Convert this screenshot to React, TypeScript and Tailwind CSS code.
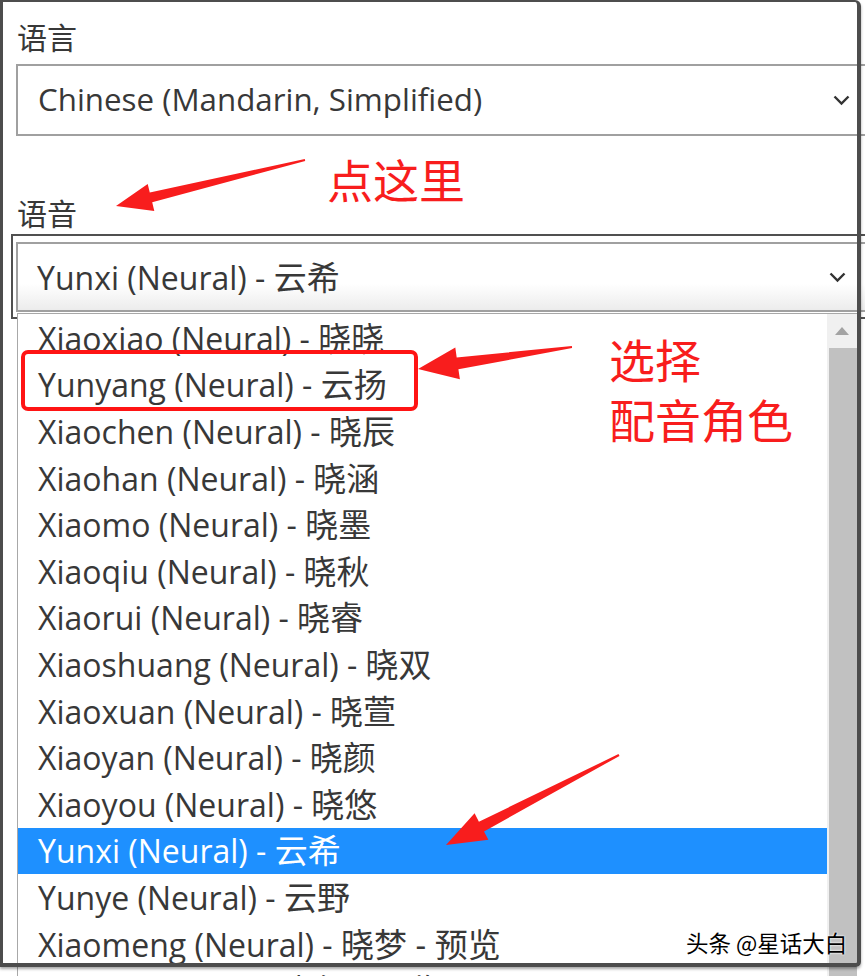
import React from 'react';

const voices = [
  { en: 'Xiaoxiao (Neural) - ', zh: '晓晓' },
  { en: 'Yunyang (Neural) - ', zh: '云扬' },
  { en: 'Xiaochen (Neural) - ', zh: '晓辰' },
  { en: 'Xiaohan (Neural) - ', zh: '晓涵' },
  { en: 'Xiaomo (Neural) - ', zh: '晓墨' },
  { en: 'Xiaoqiu (Neural) - ', zh: '晓秋' },
  { en: 'Xiaorui (Neural) - ', zh: '晓睿' },
  { en: 'Xiaoshuang (Neural) - ', zh: '晓双' },
  { en: 'Xiaoxuan (Neural) - ', zh: '晓萱' },
  { en: 'Xiaoyan (Neural) - ', zh: '晓颜' },
  { en: 'Xiaoyou (Neural) - ', zh: '晓悠' },
  { en: 'Yunxi (Neural) - ', zh: '云希' },
  { en: 'Yunye (Neural) - ', zh: '云野' },
  { en: 'Xiaomeng (Neural) - ', zh: '晓梦 - 预览' },
  { en: 'Xiaoyi (Neural) - ', zh: '晓伊 - 预览' },
];

const selected = 11;

// tapered PPT-style arrow, from tail to tip
function arrow(tx: number, ty: number, px: number, py: number, headLen: number, headW: number, w0: number, w1: number) {
  const dx = px - tx;
  const dy = py - ty;
  const len = Math.hypot(dx, dy);
  const ux = dx / len;
  const uy = dy / len;
  const nx = -uy;
  const ny = ux;
  const bx = px - ux * headLen;
  const by = py - uy * headLen;
  const pts = [
    [tx + (nx * w0) / 2, ty + (ny * w0) / 2],
    [bx + (nx * w1) / 2, by + (ny * w1) / 2],
    [bx + (nx * headW) / 2, by + (ny * headW) / 2],
    [px, py],
    [bx - (nx * headW) / 2, by - (ny * headW) / 2],
    [bx - (nx * w1) / 2, by - (ny * w1) / 2],
    [tx - (nx * w0) / 2, ty - (ny * w0) / 2],
  ];
  return pts.map(p => p.map(v => v.toFixed(1)).join(',')).join(' ');
}

function Chevron() {
  return (
    <svg width="17" height="11" viewBox="0 0 17 11" className="shrink-0">
      <path d="M1.5 1.5 L8.5 8.5 L15.5 1.5" fill="none" stroke="#333" strokeWidth="2.4" />
    </svg>
  );
}

export default function App() {
  return (
    <div className="relative w-[865px] h-[976px] overflow-hidden bg-white font-['Open_Sans','Noto_Sans_CJK_SC',sans-serif] text-[#383838]">
      {/* Form */}
      <div className="pt-[18px] pl-[16px]">
        <div className="pl-[1px] text-[30px] leading-[40px]">语言</div>
        <div className="mt-[6px] flex h-[72px] w-[860px] items-center justify-between border-2 border-[#a0a0a0] pl-[20px] pr-[24px]">
          <span className="text-[31.3px] leading-none">Chinese (Mandarin, Simplified)</span>
          <Chevron />
        </div>

        <div className="mt-[58px] pl-[1px] text-[30px] leading-[40px]">语音</div>
        <div className="-ml-[5px] w-[865px] h-[85px] border-2 border-[#505050] pt-[6px] pl-[3px]">
          <div className="flex h-[70px] items-center justify-between border-2 border-[#a0a0a0] bg-gradient-to-b from-white from-60% to-[#ececec] pl-[19px] pr-[26px]">
            <span className="text-[32px] leading-none">
              Yunxi (Neural) - <span className="text-[33px]">云希</span>
            </span>
            <Chevron />
          </div>
        </div>
      </div>

      {/* Open listbox */}
      <div className="absolute left-[17px] top-[313px] flex w-[840px] h-[700px] border-l border-t border-[#a8a8a8] bg-white">
        <div className="flex-1 pt-[1px]">
          {voices.map((v, i) => (
            <div
              key={v.en}
              className={
                i === selected
                  ? 'flex h-[46.6px] items-center pl-[20px] bg-[#1e90ff] text-white'
                  : 'flex h-[46.6px] items-center pl-[20px]'
              }
            >
              <span className="text-[32px] leading-none whitespace-nowrap">
                {v.en}
                <span className="text-[33px]">{v.zh}</span>
              </span>
            </div>
          ))}
        </div>
        <div className="flex w-[30px] flex-col bg-[#f0f0f0]">
          <div className="flex h-[34px] items-center justify-center">
            <svg width="14" height="8" viewBox="0 0 14 8">
              <path d="M0 8 L7 0 L14 8 Z" fill="#a3a3a3" />
            </svg>
          </div>
          <div className="ml-[2px] flex-1 bg-[#c1c1c1]" />
        </div>
      </div>

      {/* Red box around Yunyang */}
      <div className="pointer-events-none absolute left-[21px] top-[350px] w-[397px] h-[61px] rounded-[7px] border-4 border-[#ff1414]" />

      {/* Window frame */}
      <div className="pointer-events-none absolute left-0 top-0 w-[861px] h-[967px] rounded-tr-[6px] rounded-br-[5px] border-l-[3px] border-t-[2px] border-r-[4px] border-b-[4px] border-[#4d4d4d] shadow-[0_2px_3px_rgba(0,0,0,0.35)]" />

      {/* Annotation arrows */}
      <svg className="pointer-events-none absolute inset-0" width="865" height="976">
        <polygon points={arrow(305, 160, 116, 206, 36, 28, 2, 10)} fill="#f81d1d" />
        <polygon points={arrow(572, 347, 418, 369, 40, 32, 2, 12)} fill="#f81d1d" />
        <polygon points={arrow(619, 755, 446, 845, 40, 30, 2, 11)} fill="#f81d1d" />
      </svg>

      {/* Annotation text */}
      <div className="absolute left-[327px] top-[148px] text-[46px] leading-[60px] text-[#f81d1d] font-['Noto_Sans_CJK_SC',sans-serif]">
        点这里
      </div>
      <div className="absolute left-[609px] top-[328px] text-[46px] leading-[60px] text-[#f81d1d] font-['Noto_Sans_CJK_SC',sans-serif]">
        <div>选择</div>
        <div>配音角色</div>
      </div>

      {/* Watermark */}
      <div className="absolute left-[686px] top-[927px] text-[22.5px] leading-[30px] text-black font-['Noto_Sans_CJK_SC',sans-serif] [text-shadow:0_0_2px_#fff,0_0_2px_#fff]">
        头条 @星话大白
      </div>
    </div>
  );
}
